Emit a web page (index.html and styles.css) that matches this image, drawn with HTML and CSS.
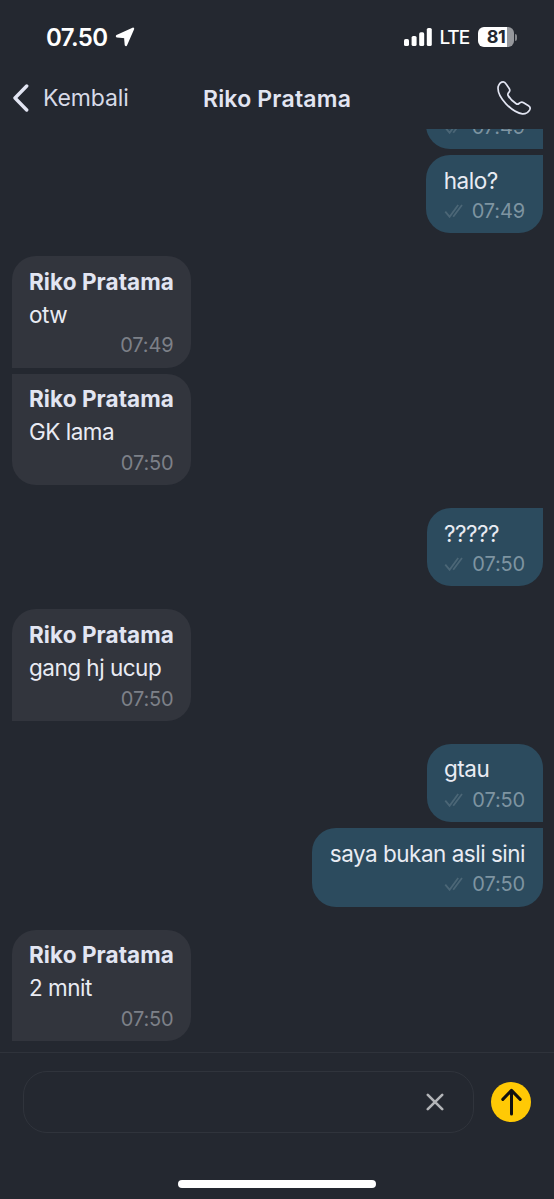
FILE: index.html
```
<!DOCTYPE html>
<html lang="id">
<head>
<meta charset="utf-8">
<title>Riko Pratama</title>
<link rel="stylesheet" href="styles.css">
</head>
<body>
<svg width="0" height="0" class="defs">
  <symbol id="checks" viewBox="0 0 19 14"><path d="M1.3 7.6 5.6 12.8 14.2 1M9.2 12.8 18 1" fill="none" stroke="currentColor" stroke-width="1.8"/></symbol>
</svg>
<div class="screen">
  <header class="status">
    <div class="clock">
      <span class="time-now">07.50</span>
      <svg width="20" height="20" viewBox="0 0 20 20"><path d="M18 1.8 10.9 18 10.2 10.1 2 9.2Z" fill="#fff" stroke="#fff" stroke-width="2.4" stroke-linejoin="round"/></svg>
    </div>
    <div class="signals">
      <svg width="28" height="18" viewBox="0 0 28 18" fill="#fff"><rect x="0" y="11" width="5" height="7" rx="1.6"/><rect x="7.6" y="8" width="5" height="10" rx="1.6"/><rect x="15.2" y="4.3" width="5" height="13.7" rx="1.6"/><rect x="22.8" y="0" width="5" height="18" rx="1.6"/></svg>
      <span class="network">LTE</span>
      <div class="battery"><span class="level">81</span></div>
      <i class="tip"></i>
    </div>
  </header>
  <nav class="bar">
    <div class="back">
      <svg width="17" height="28" viewBox="0 0 17 28"><path d="M14.7 2 3 14 14.7 26" fill="none" stroke="#e2e5f2" stroke-width="3.4" stroke-linecap="round" stroke-linejoin="round"/></svg>
      <span class="back-label">Kembali</span>
    </div>
    <h1 class="title">Riko Pratama</h1>
    <svg class="phone" width="36" height="36" viewBox="0 0 36 36"><path d="M2.2 6.5C3 4.2 5.2 1.9 7.3 1.9C8.6 1.9 9.4 2.8 10.3 4.2L13.2 8.4C14.2 9.9 14.1 10.9 13 12.2C11.8 13.5 11.3 14.2 12.1 15.5C14 18.9 16.9 21.6 20.2 23.8C21.4 24.6 22 24.4 23 23.5C24.6 22 26 21.8 27.6 22.7L32.5 25.7C34.4 26.9 34.6 28.1 33.7 29.8C32.2 32.4 29.8 34 26.4 33.8C21.2 33.3 14.8 28.8 10 23.8C5.2 18.7 1.1 12.5 2.2 6.5Z" fill="none" stroke="#e2e5f2" stroke-width="1.7" stroke-linejoin="round"/></svg>
  </nav>
  <main class="messages">
    <div class="group out">
      <div class="bubble"><p class="text"></p><div class="meta"><svg class="checks"><use href="#checks"/></svg><time>07:49</time></div></div>
      <div class="bubble"><p class="text">halo?</p><div class="meta"><svg class="checks"><use href="#checks"/></svg><time>07:49</time></div></div>
    </div>
    <div class="group in">
      <div class="bubble"><b class="name">Riko Pratama</b><p class="text">otw</p><div class="meta"><time>07:49</time></div></div>
      <div class="bubble"><b class="name">Riko Pratama</b><p class="text">GK lama</p><div class="meta"><time>07:50</time></div></div>
    </div>
    <div class="group out">
      <div class="bubble continued"><p class="text">?????</p><div class="meta"><svg class="checks"><use href="#checks"/></svg><time>07:50</time></div></div>
    </div>
    <div class="group in">
      <div class="bubble single"><b class="name">Riko Pratama</b><p class="text">gang hj ucup</p><div class="meta"><time>07:50</time></div></div>
    </div>
    <div class="group out">
      <div class="bubble"><p class="text">gtau</p><div class="meta"><svg class="checks"><use href="#checks"/></svg><time>07:50</time></div></div>
      <div class="bubble"><p class="text">saya bukan asli sini</p><div class="meta"><svg class="checks"><use href="#checks"/></svg><time>07:50</time></div></div>
    </div>
    <div class="group in">
      <div class="bubble single"><b class="name">Riko Pratama</b><p class="text">2 mnit</p><div class="meta"><time>07:50</time></div></div>
    </div>
  </main>
  <footer class="composer">
    <div class="field">
      <svg width="18" height="18" viewBox="0 0 18 18"><path d="M1.8 1.8 16.2 16.2M16.2 1.8 1.8 16.2" stroke="#b3b5b8" stroke-width="2.6" stroke-linecap="round"/></svg>
    </div>
    <div class="send">
      <svg width="21" height="28" viewBox="0 0 21 28"><path d="M10.5 26V2.6M1.8 11.4 10.5 2.4 19.2 11.4" fill="none" stroke="#101010" stroke-width="3" stroke-linecap="round" stroke-linejoin="round"/></svg>
    </div>
  </footer>
  <div class="home"></div>
</div>
</body>
</html>
```
FILE: styles.css
```
* { box-sizing: border-box; margin: 0; padding: 0; }
body { background: #242830; font-family: Inter, "Liberation Sans", sans-serif; color: #e2e5f2; }
.defs { position: absolute; }
.screen { width: 554px; height: 1199px; display: flex; flex-direction: column; overflow: hidden; }
.status { height: 74px; flex: none; display: flex; justify-content: space-between; align-items: center; padding: 0 37px 0 46px; color: #fff; }
.clock, .signals, .back { display: flex; align-items: center; }
.clock { gap: 7px; }
.time-now { font-size: 24px; font-weight: 600; letter-spacing: -0.6px; }
.network { font-size: 19px; font-weight: 500; letter-spacing: -1.1px; margin: 1px 9px 0 7px; }
.battery { width: 36px; height: 20px; border-radius: 6px; background: linear-gradient(90deg, #fff 0 29px, #96989c 29px); display: flex; align-items: center; justify-content: center; }
.level { font-size: 18px; font-weight: 700; line-height: 20px; color: #242830; letter-spacing: -0.5px; }
.tip { width: 2px; height: 7px; margin-left: 1px; border-radius: 0 2px 2px 0; background: #85878b; }
.bar { height: 55px; flex: none; display: grid; grid-template-columns: 1fr auto 1fr; align-items: center; padding: 0 22px 7px; }
.back { gap: 14px; margin: 0 0 0 -10px; }
.back-label { font-size: 23px; letter-spacing: -0.1px; color: #d7dae7; }
.title { font-size: 23px; font-weight: 600; letter-spacing: 0.2px; margin-top: 2px; }
.phone { justify-self: end; }
.messages { height: 923px; flex: none; overflow: hidden; display: flex; flex-direction: column; justify-content: flex-end; gap: 23px; padding: 0 11.5px 11.2px 11.5px; }
.group { display: flex; flex-direction: column; gap: 6.2px; }
.in { align-items: flex-start; }
.out { align-items: flex-end; }
.bubble { padding: 9.6px 17.5px 0; border-radius: 24px; display: flex; flex-direction: column; flex: none; }
.in .bubble { width: 179.5px; height: 111.3px; background: #32353d; }
.out .bubble { min-width: 116px; height: 78.3px; background: #2c4b5e; }
.in .bubble:first-child { border-bottom-left-radius: 0; }
.in .bubble:last-child:not(.single) { border-top-left-radius: 0; }
.out .bubble:first-child:not(.continued) { border-bottom-right-radius: 0; }
.out .bubble:last-child:not(:first-child), .out .continued { border-top-right-radius: 0; }
.name { font-size: 22.5px; font-weight: 700; line-height: 31px; letter-spacing: 0.08px; height: 33px; white-space: nowrap; }
.text { font-size: 22.5px; line-height: 31px; height: 31px; flex: none; letter-spacing: -0.5px; white-space: nowrap; color: #e9ebf3; }
.meta { display: flex; justify-content: flex-end; align-items: center; gap: 9px; height: 31px; font-size: 20px; letter-spacing: -0.15px; color: #7d8088; }
.out .meta { color: #7e94a1; }
.checks { width: 19px; height: 14px; color: #4b6676; }
.composer { height: 100px; flex: none; border-top: 1.5px solid #2f333b; display: flex; align-items: center; gap: 17px; padding: 0 23px 1px; }
.field { width: 451px; height: 62px; border: 1.5px solid #30343c; border-radius: 24px; display: flex; align-items: center; justify-content: flex-end; padding-right: 29px; }
.send { width: 40px; height: 40px; flex: none; border-radius: 50%; background: #ffc905; display: flex; align-items: center; justify-content: center; }
.home { width: 198px; height: 8px; flex: none; border-radius: 4px; background: #fff; margin: 28px 0 0 178px; }
```
